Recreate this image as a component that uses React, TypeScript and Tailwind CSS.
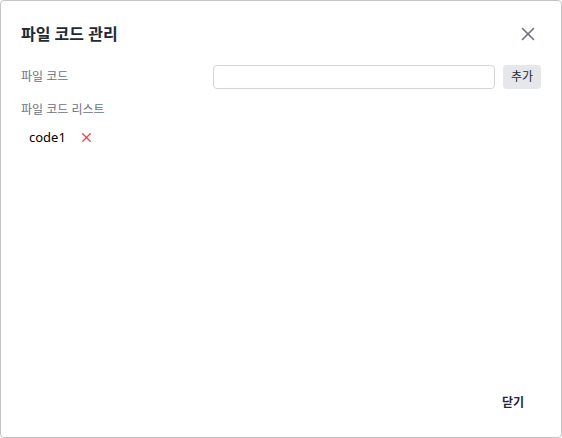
import { X } from "lucide-react";

export default function App() {
  return (
    <div className="flex h-[438px] w-[562px] flex-col rounded-[4px] border border-[#c4c4c4] bg-white font-['Noto_Sans','Noto_Sans_CJK_KR',sans-serif]">
      <div className="flex items-center justify-between pl-[20px] pr-[22px] pt-[21px]">
        <h2 className="text-[16px] font-bold leading-[24px] text-[#1f2937]">파일 코드 관리</h2>
        <button type="button" className="text-[#6b7280]">
          <X size={22} strokeWidth={1.75} />
        </button>
      </div>

      <div className="mt-[19px] flex items-center pl-[20px] pr-[20px]">
        <span className="w-[192px] text-[12px] text-[#6b7280]">파일 코드</span>
        <input className="h-[24px] flex-1 rounded-[4px] border border-[#d1d5db] px-2 text-[12px] outline-none" />
        <button
          type="button"
          className="ml-[8px] h-[24px] w-[38px] rounded-[4px] bg-[#e5e7eb] text-[12px] text-[#1f2937]"
        >
          추가
        </button>
      </div>

      <div className="mt-[12px] px-[20px] text-[12px] leading-[18px] text-[#6b7280]">파일 코드 리스트</div>

      <div className="mt-[9px] flex items-center gap-[13px] pl-[28px]">
        <span className="text-[13px] leading-[18px] text-black">code1</span>
        <button type="button" className="text-[#ef4444]">
          <X size={15} strokeWidth={2} />
        </button>
      </div>

      <div className="mt-auto flex justify-end pb-[24px] pr-[37px]">
        <button type="button" className="text-[12px] font-bold leading-[20px] text-[#1f2937]">
          닫기
        </button>
      </div>
    </div>
  );
}
